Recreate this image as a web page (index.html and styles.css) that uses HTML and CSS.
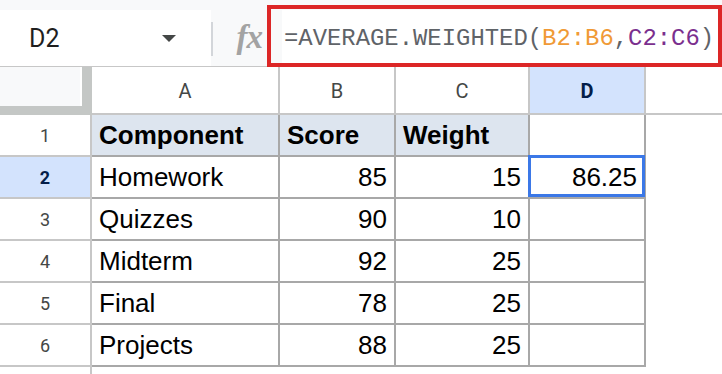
FILE: index.html
```html
<!DOCTYPE html>
<html>
<head>
<meta charset="utf-8">
<link rel="stylesheet" href="styles.css">
</head>
<body>
<div class="app">
  <div class="topbar">
    <div class="namebox">
      <span class="cellref">D2</span>
      <span class="caret"></span>
    </div>
    <div class="sep"></div>
    <div class="fx">fx</div>
    <div class="formula-gap"></div>
    <div class="formula"><span class="fn">=AVERAGE.WEIGHTED(</span><span class="ref1">B2:B6</span><span class="fn">,</span><span class="ref2">C2:C6</span><span class="fn">)</span></div>
    <div class="highlight"></div>
  </div>
  <div class="grid">
    <div class="corner"></div>
    <div class="colhead">A</div>
    <div class="colhead">B</div>
    <div class="colhead">C</div>
    <div class="colhead active">D</div>
    <div class="colhead rest"></div>

    <div class="rowhead">1</div>
    <div class="cell hdr">Component</div>
    <div class="cell hdr">Score</div>
    <div class="cell hdr">Weight</div>
    <div class="cell"></div>
    <div class="blank"></div>

    <div class="rowhead active">2</div>
    <div class="cell">Homework</div>
    <div class="cell num">85</div>
    <div class="cell num">15</div>
    <div class="cell num selected">86.25</div>
    <div class="blank"></div>

    <div class="rowhead">3</div>
    <div class="cell">Quizzes</div>
    <div class="cell num">90</div>
    <div class="cell num">10</div>
    <div class="cell"></div>
    <div class="blank"></div>

    <div class="rowhead">4</div>
    <div class="cell">Midterm</div>
    <div class="cell num">92</div>
    <div class="cell num">25</div>
    <div class="cell"></div>
    <div class="blank"></div>

    <div class="rowhead">5</div>
    <div class="cell">Final</div>
    <div class="cell num">78</div>
    <div class="cell num">25</div>
    <div class="cell"></div>
    <div class="blank"></div>

    <div class="rowhead">6</div>
    <div class="cell">Projects</div>
    <div class="cell num">88</div>
    <div class="cell num">25</div>
    <div class="cell"></div>
    <div class="blank"></div>

    <div class="rowhead tail"></div>
  </div>
</div>
</body>
</html>
```
FILE: styles.css
```css
* { box-sizing: border-box; }
html, body { margin: 0; padding: 0; background: #ffffff; }
body { width: 722px; height: 374px; overflow: hidden; font-family: Roboto, "Liberation Sans", Arial, sans-serif; }

.app { width: 722px; height: 374px; display: flex; flex-direction: column; }

.topbar {
  position: relative;
  height: 67px;
  background: #f8f9fa;
  padding-top: 10px;
  display: flex;
  align-items: stretch;
  border-bottom: 1px solid #c7c7c7;
}
.namebox {
  width: 211px;
  background: #ffffff;
  display: flex;
  align-items: center;
  justify-content: space-between;
  padding: 0 35px 0 29px;
}
.cellref { font-family: Roboto, sans-serif; font-size: 25px; color: #1f1f1f; }
.caret {
  width: 0; height: 0;
  border-left: 7px solid transparent;
  border-right: 7px solid transparent;
  border-top: 7px solid #444746;
}
.sep { width: 2px; margin: 12px 0 10px; background: #d3d6da; }
.fx {
  width: 58px;
  font-family: "Liberation Serif", serif;
  font-style: italic;
  font-weight: bold;
  font-size: 33px;
  color: #a3a3a3;
  display: flex;
  align-items: center;
  justify-content: flex-end;
  padding-right: 9px;
  padding-bottom: 2px;
  letter-spacing: -1px;
}
.formula-gap { width: 11px; }
.formula {
  flex: 1;
  background: #ffffff;
  display: flex;
  align-items: center;
  padding-left: 2px;
  font-family: "Liberation Mono", monospace;
  font-size: 23.9px;
  white-space: pre;
}
.fn { color: #5f6368; }
.ref1 { color: #f09a36; }
.ref2 { color: #7b2f8e; }
.highlight {
  position: absolute;
  left: 267px; top: 5px;
  width: 455px; height: 62px;
  border: 4px solid #dc2626;
}

.grid {
  flex: 1;
  display: grid;
  grid-template-columns: 92px 188px 116px 134px 116px 1fr;
  grid-template-rows: 48px repeat(6, 42px) 1fr;
}
.corner {
  background: #f8f9fa;
  border-right: 10px solid #c4c7c5;
  border-bottom: 9px solid #c4c7c5;
  box-shadow: inset -2px 0 0 #ffffff;
}
.colhead {
  background: #ffffff;
  border-right: 2px solid #c7c7c7;
  border-bottom: 2px solid #c7c7c7;
  display: flex;
  align-items: center;
  justify-content: center;
  font-family: Roboto, sans-serif;
  font-size: 20px;
  color: #444746;
  padding-top: 2px;
}
.colhead.active { background: #d3e3fd; color: #041e49; font-weight: bold; }
.colhead.rest { border-right: none; }

.rowhead {
  background: #ffffff;
  border-right: 2px solid #c7c7c7;
  border-bottom: 2px solid #c7c7c7;
  display: flex;
  align-items: center;
  justify-content: center;
  font-family: Roboto, sans-serif;
  font-size: 18px;
  color: #444746;
}
.rowhead.active { background: #d3e3fd; color: #041e49; font-weight: bold; }
.rowhead.tail { border-bottom: none; }

.cell {
  position: relative;
  border-right: 2px solid #a8a8a8;
  border-bottom: 2px solid #a8a8a8;
  display: flex;
  align-items: flex-end;
  padding: 0 7px 4px 7px;
  font-family: "Liberation Sans", Arial, sans-serif;
  font-size: 26px;
  color: #000000;
  line-height: 32px;
  white-space: nowrap;
}
.cell.hdr { background: #dde5ef; font-weight: bold; }
.cell.num { justify-content: flex-end; }
.cell.selected::after {
  content: "";
  position: absolute;
  left: -2px; top: -2px; right: -1px; bottom: 0;
  border: 3px solid #3b78e7;
}
.blank { background: #ffffff; }
```
